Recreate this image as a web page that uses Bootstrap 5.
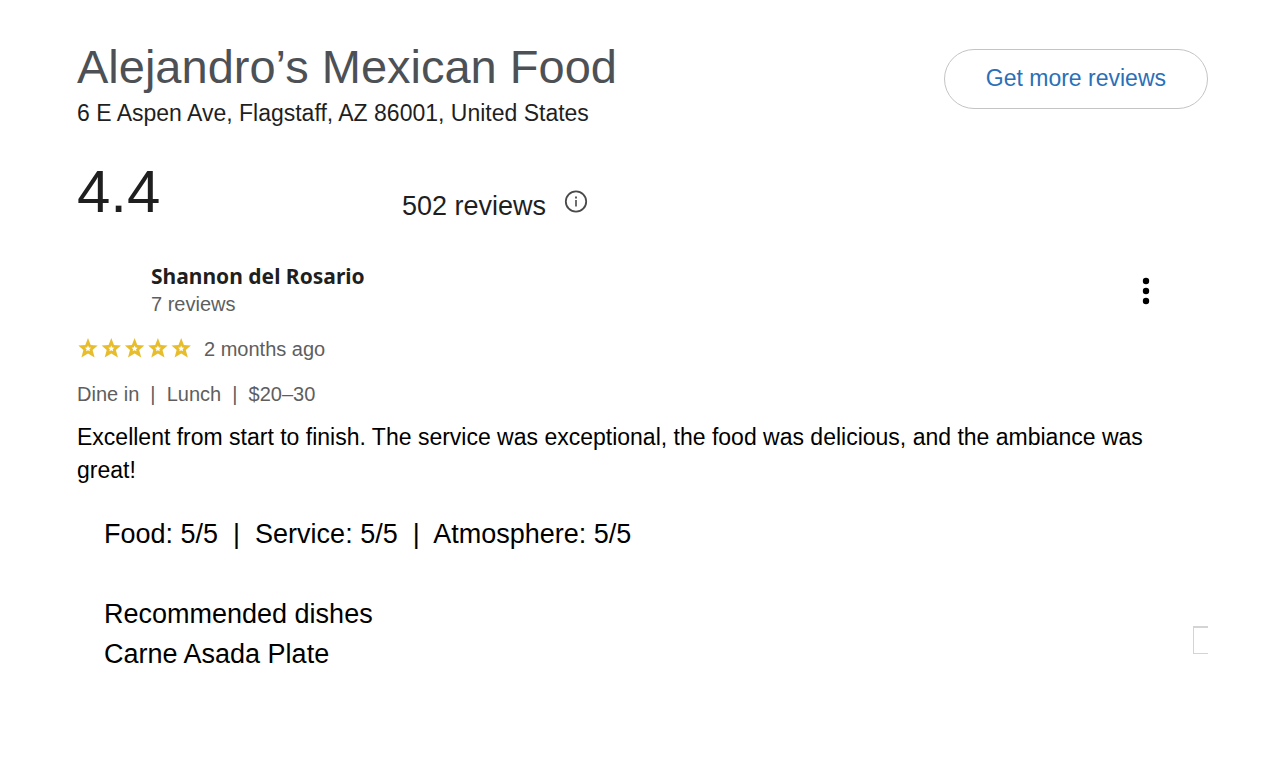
<!DOCTYPE html>
<html lang="en">
<head>
<meta charset="utf-8">
<meta name="viewport" content="width=device-width, initial-scale=1">
<title>Alejandro’s Mexican Food – Reviews</title>
<link href="https://cdn.jsdelivr.net/npm/bootstrap@5.3.0/dist/css/bootstrap.min.css" rel="stylesheet">
<style>
  body { font-family: "Liberation Sans", Arial, sans-serif; color: #000; background: #fff; }
  .reviews-page { padding: 40px 58px 40px 77px; }
  .place-name { font-size: 47px; line-height: 54px; color: #4d5156; }
  .place-address { font-size: 23px; line-height: 38px; color: #1f1f1f; }
  .btn-more { font-size: 23px; line-height: 32px; color: #2a70b8; border: 1px solid #c4c4c4; border-radius: 30px; padding: 12px 41px 14px; margin-top: 9px; }
  .btn-more:hover { color: #174ea6; border-color: #aecbfa; }
  .rating { margin-top: 30px; }
  .score { font-size: 60px; line-height: 60px; color: #1f1f1f; width: 325px; }
  .review-count { font-size: 27px; line-height: 32px; color: #1f1f1f; }
  .info-btn { width: 24px; height: 24px; margin-left: 18px; }
  .review-entry { margin-top: 40px; }
  .avatar-space { width: 74px; }
  .reviewer { font-family: "Noto Sans", sans-serif; font-weight: 700; font-size: 21px; line-height: 29px; color: #1f1f1f; }
  .meta { font-size: 20px; line-height: 26px; color: #5e5e5e; }
  .meta-row { margin-top: 19px; }
  .menu-btn { padding: 3px 0 0; margin-right: 56px; }
  .review-text { font-size: 23px; line-height: 33px; margin-top: 14px; padding-right: 24px; }
  .details { font-size: 27px; line-height: 40px; padding-left: 27px; }
  .details-row { margin-top: 27px; }
  .dishes { margin-top: 40px; }
  .dishes-title { font-size: 27px; line-height: 40px; }
  .half-box { width: 15px; height: 28px; margin-bottom: 20px; border: 1px solid #d4d4d4; border-top-width: 2px; border-right: 0; }
</style>
</head>
<body>
<main class="reviews-page">
  <header class="d-flex justify-content-between align-items-start">
    <div>
      <h1 class="place-name fw-normal mb-0">Alejandro’s Mexican Food</h1>
      <p class="place-address mb-0">6 E Aspen Ave, Flagstaff, AZ 86001, United States</p>
    </div>
    <button type="button" class="btn btn-more flex-shrink-0">Get more reviews</button>
  </header>

  <section class="rating d-flex align-items-end" aria-label="Overall rating">
    <div class="score">4.4</div>
    <div class="d-flex align-items-start">
      <span class="review-count">502 reviews</span>
      <button type="button" class="btn p-0 border-0 info-btn d-flex" aria-label="About these reviews">
        <svg width="24" height="24" viewBox="0 0 24 24" fill="none" stroke="#4a4a4a"><circle cx="12" cy="11.5" r="10.2" stroke-width="1.8"/><path d="M12 10V16.500" stroke-width="1.6"/><path d="M12 6.500v2" stroke-width="1.8"/></svg>
      </button>
    </div>
  </section>

  <article class="review-entry">
    <div class="d-flex justify-content-between align-items-center">
      <div class="d-flex">
        <div class="avatar-space"></div>
        <div>
          <h2 class="reviewer mb-0">Shannon del Rosario</h2>
          <p class="meta mb-0">7 reviews</p>
        </div>
      </div>
      <button type="button" class="btn border-0 menu-btn d-flex" aria-label="More options">
        <svg width="12" height="32" viewBox="0 0 12 32" fill="#000"><circle cx="6" cy="6" r="3.2"/><circle cx="6" cy="16" r="3.2"/><circle cx="6" cy="26" r="3.2"/></svg>
      </button>
    </div>

    <div class="meta meta-row d-flex align-items-center">
      <svg width="127" height="24" viewBox="0 0 127 24" role="img" aria-label="5 out of 5 stars">
        <defs><path id="star" fill="#e8bd2c" fill-rule="evenodd" d="M11 1L13.7 8L20.7 8.400L15.6 13L17.6 20.500L11 16.500L4.400 20.500L6.400 13L1.3 8.400L8.3 8ZM11 8.400L10.1 10.400L8 10.700L9.600 12.200L9.100 14.300L11 13.200L12.900 14.300L12.400 12.200L14 10.700L11.900 10.400Z"/></defs>
        <use href="#star" x="0"/><use href="#star" x="23.3"/><use href="#star" x="46.6"/><use href="#star" x="69.9"/><use href="#star" x="93.2"/>
      </svg>
      <span>2 months ago</span>
    </div>

    <p class="meta meta-row mb-0">Dine in&nbsp; |&nbsp; Lunch&nbsp; |&nbsp; $20–30</p>
    <p class="review-text mb-0">Excellent from start to finish. The service was exceptional, the food was delicious, and the ambiance was great!</p>

    <div class="details-row d-flex justify-content-between align-items-end">
      <div class="details">
        <p class="mb-0">Food: 5/5&nbsp; |&nbsp; Service: 5/5&nbsp; |&nbsp; Atmosphere: 5/5</p>
        <div class="dishes">
          <h3 class="dishes-title fw-normal mb-0">Recommended dishes</h3>
          <p class="mb-0">Carne Asada Plate</p>
        </div>
      </div>
      <div class="half-box"></div>
    </div>
  </article>
</main>
<script src="https://cdn.jsdelivr.net/npm/bootstrap@5.3.0/dist/js/bootstrap.bundle.min.js"></script>
</body>
</html>
